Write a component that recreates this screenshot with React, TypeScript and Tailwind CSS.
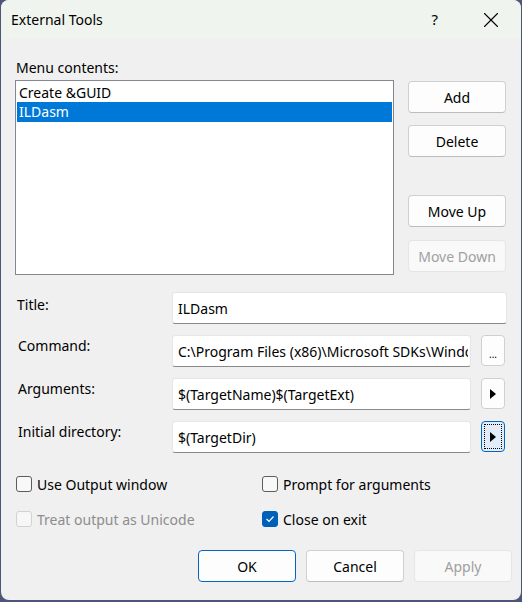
import { X } from "lucide-react";

const font = { fontFamily: '"Noto Sans", "Open Sans", sans-serif' };

const Btn = ({ label, disabled, primary, className = "" }: { label: string; disabled?: boolean; primary?: boolean; className?: string }) => (
  <div
    className={`flex h-[32px] w-[98px] items-center justify-center rounded-[4px] border text-[14px] ${
      disabled
        ? "border-[#e5e5e5] bg-[#f9f9f9] text-[#a0a0a0]"
        : primary
        ? "border-[#0067c0] bg-[#fdfdfd] text-black"
        : "border-[#d0d0d0] border-b-[#bcbcbc] bg-[#fdfdfd] text-black"
    } ${className}`}
  >
    {label}
  </div>
);

const TextBox = ({ value, className = "" }: { value: string; className?: string }) => (
  <div
    className={`flex h-[32px] items-center rounded-[3px] border border-[#e6e6e6] border-b-[#8a8a8a] bg-white pl-[5px] pr-[2px] text-[14px] text-black ${className}`}
  >
    <span className="block min-w-0 flex-1 overflow-hidden whitespace-nowrap">{value}</span>
  </div>
);

const Arrow = () => (
  <svg width="6" height="10" viewBox="0 0 6 10">
    <path d="M0 0 L6 5 L0 10 Z" fill="black" />
  </svg>
);

const SmallBtn = ({ children, focused }: { children: React.ReactNode; focused?: boolean }) => (
  <div
    className={`ml-[10px] flex h-[31px] w-[24px] items-center justify-center rounded-[4px] border ${
      focused ? "border-[#0067c0] bg-[#e1ecf8] p-[2px]" : "border-[#d0d0d0] bg-[#fdfdfd]"
    }`}
  >
    {focused ? (
      <div className="flex h-full w-full items-center justify-center border border-dotted border-black">{children}</div>
    ) : (
      children
    )}
  </div>
);

const Check = ({ label, checked, disabled }: { label: string; checked?: boolean; disabled?: boolean }) => (
  <div className="flex h-[20px] items-center">
    <div
      className={`flex h-[16px] w-[16px] items-center justify-center rounded-[3px] border ${
        checked
          ? "border-[#005fb8] bg-[#005fb8]"
          : disabled
          ? "border-[#d2d2d2] bg-[#f7f7f7]"
          : "border-[#5c5c5c] bg-[#f8f8f8]"
      }`}
    >
      {checked && (
        <svg width="10" height="8" viewBox="0 0 10 8">
          <path d="M1.5 4 L4 6.3 L8.5 1.5" stroke="white" strokeWidth="1.2" fill="none" />
        </svg>
      )}
    </div>
    <span className={`ml-[5px] text-[14px] ${disabled ? "text-[#8d8d8d]" : "text-black"}`}>{label}</span>
  </div>
);

export default function App() {
  return (
    <div className="h-[602px] w-[522px] bg-[#4d5579] px-px pb-[2px]" style={font}>
      <div className="flex h-[600px] flex-col overflow-hidden rounded-[8px] bg-[#f0f0f0]">
        <div className="flex h-[39px] shrink-0 items-center bg-[#eff4ee] pl-[10px] text-[14px] text-black">
          <span>External Tools</span>
          <span className="ml-auto mr-[40px] text-[15px]">?</span>
          <X size={26} strokeWidth={1} className="mr-[17px]" />
        </div>

        <div className="flex flex-col px-[14px]">
          <div className="mt-[19px] h-[20px] pl-px text-[14px] leading-[20px]">Menu contents:</div>
          <div className="mt-[2px] flex">
            <div className="h-[195px] w-[379px] border border-[#828790] bg-white p-px text-[14px]">
              <div className="h-[20px] pl-[2px] pt-px leading-[20px]">Create &amp;GUID</div>
              <div className="h-[20px] bg-[#0078d7] pl-[2px] leading-[20px] text-white">ILDasm</div>
            </div>
            <div className="ml-[14px] flex flex-col">
              <Btn label="Add" className="mt-[1px]" />
              <Btn label="Delete" className="mt-[12px]" />
              <Btn label="Move Up" className="mt-[38px]" />
              <Btn label="Move Down" disabled className="mt-[13px]" />
            </div>
          </div>

          <div className="mt-[17px] flex flex-col gap-[11px]">
            <div className="flex">
              <div className="w-[157px] pt-[3px] pl-[2px] text-[14px] leading-[20px]">Title:</div>
              <TextBox value="ILDasm" className="w-[335px]" />
            </div>
            <div className="flex">
              <div className="w-[157px] pt-[1px] pl-[3px] text-[14px] leading-[20px]">Command:</div>
              <TextBox value="C:\Program Files (x86)\Microsoft SDKs\Windows\v10.0A\bin\NETFX 4.8 Tools\ildasm.exe" className="w-[299px]" />
              <SmallBtn>
                <span className="mt-[6px] text-[10px] leading-none">...</span>
              </SmallBtn>
            </div>
            <div className="flex">
              <div className="w-[157px] pt-[1px] pl-[3px] text-[14px] leading-[20px]">Arguments:</div>
              <TextBox value="$(TargetName)$(TargetExt)" className="w-[299px]" />
              <SmallBtn>
                <Arrow />
              </SmallBtn>
            </div>
            <div className="flex">
              <div className="w-[157px] pt-[1px] pl-[3px] text-[14px] leading-[20px]">Initial directory:</div>
              <TextBox value="$(TargetDir)" className="w-[299px]" />
              <SmallBtn focused>
                <Arrow />
              </SmallBtn>
            </div>
          </div>

          <div className="mt-[21px] grid grid-cols-[246px_1fr] gap-y-[15px] pl-px">
            <Check label="Use Output window" />
            <Check label="Prompt for arguments" />
            <Check label="Treat output as Unicode" disabled />
            <Check label="Close on exit" checked />
          </div>

          <div className="mt-[21px] flex justify-end gap-[10px]">
            <Btn label="OK" primary />
            <Btn label="Cancel" />
            <Btn label="Apply" disabled className="mr-[-5px]" />
          </div>
        </div>
      </div>
    </div>
  );
}
